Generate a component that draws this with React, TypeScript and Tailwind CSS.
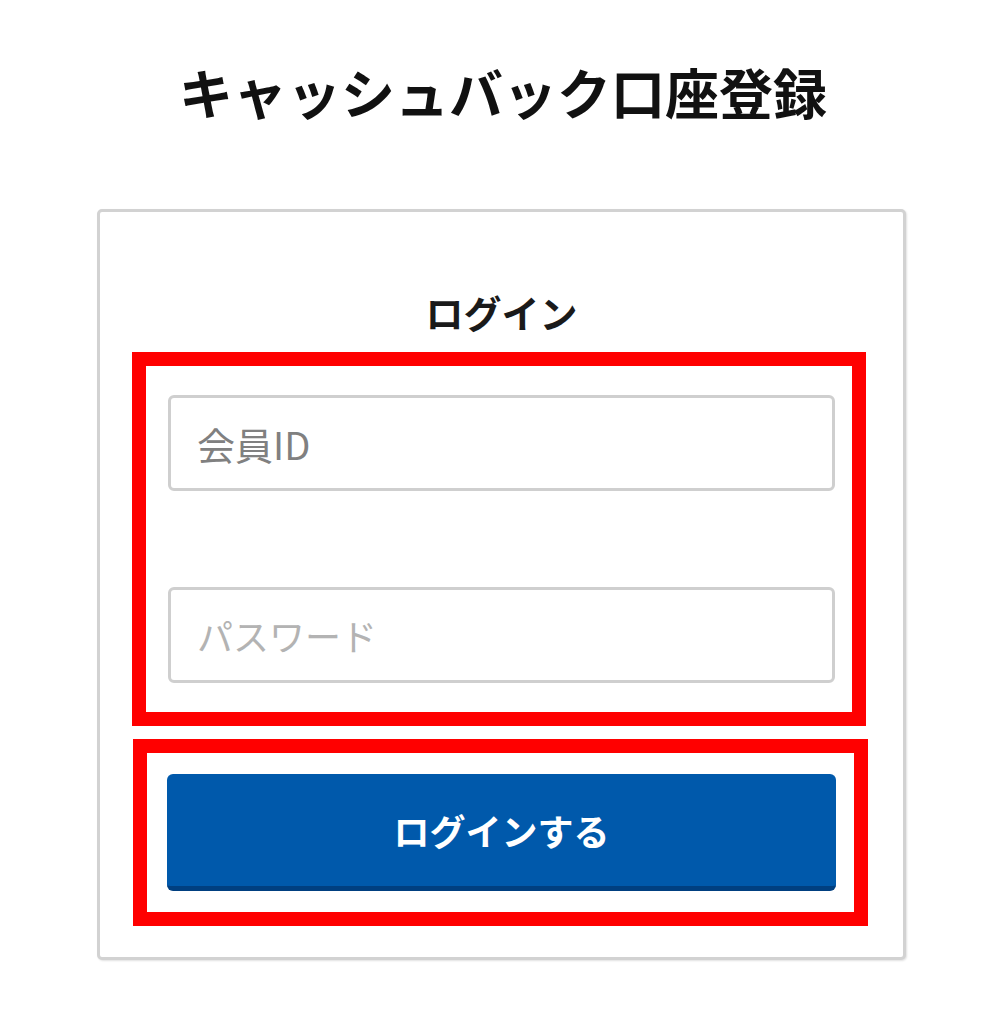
import React from "react";

export default function App() {
  const jp = { fontFamily: '"Noto Sans CJK JP", "Noto Sans", sans-serif' };
  return (
    <div className="min-h-[1024px] w-[989px] bg-white" style={jp}>
      <h1 className="ml-[97px] w-[812px] pt-[65px] text-center text-[54px] font-bold leading-none text-[#111] tracking-[0px]">
        キャッシュバック口座登録
      </h1>
      <div className="ml-[97px] mt-[90px] w-[809px] h-[751px] rounded-[5px] border-[3px] border-[#d2d2d2] shadow-[1px_1px_2px_rgba(0,0,0,0.12)] bg-white">
        <h2 className="pt-[81px] text-center text-[38px] font-bold leading-none text-[#1a1a1a]">
          ログイン
        </h2>
        <div className="ml-[32px] mt-[21px] w-[734px] border-[14px] border-[#ff0000] pl-[22px] pr-[17px] pt-[29px] pb-[29px]">
          <div className="flex h-[96px] items-center rounded-[6px] border-[3px] border-[#cfcfcf] pl-[26px] text-[38px] text-[#808080]">
            会員ID
          </div>
          <div className="mt-[96px] flex h-[96px] items-center rounded-[6px] border-[3px] border-[#cfcfcf] pl-[26px] text-[36px] text-[#b3b3b3]">
            パスワード
          </div>
        </div>
        <div className="ml-[33px] mt-[13px] w-[735px] border-[14px] border-[#ff0000] pl-[20px] pr-[18px] pt-[21px] pb-[21px]">
          <button className="flex h-[117px] w-full items-center justify-center rounded-[6px] bg-[#0059ab] border-b-[5px] border-[#003f80] text-[36px] font-bold text-white">
            ログインする
          </button>
        </div>
      </div>
    </div>
  );
}
